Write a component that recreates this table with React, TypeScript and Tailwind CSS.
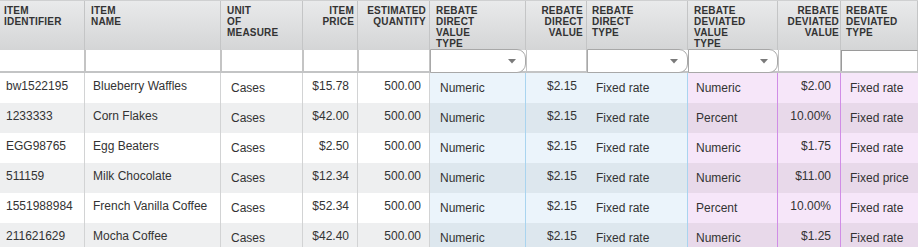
import React from 'react';

type Align = 'left' | 'right';
type Tone = 'plain' | 'direct' | 'deviated';

interface Column {
  key: string;
  label: string[];
  align: Align;
  tone: Tone;
  width: string;
  headPad: string;
  cellPad: string;
  divider: string;
  filter: 'input' | 'select';
}

const columns: Column[] = [
  { key: 'id', label: ['ITEM', 'IDENTIFIER'], align: 'left', tone: 'plain', width: 'w-[85px]', headPad: 'pl-[4px]', cellPad: 'pl-[6px] pr-[8px] pt-[5px]', divider: 'border-[#d2d3d4]', filter: 'input' },
  { key: 'name', label: ['ITEM', 'NAME'], align: 'left', tone: 'plain', width: 'w-[136px]', headPad: 'pl-[6px]', cellPad: 'pl-[8px] pt-[5px]', divider: 'border-[#d2d3d4]', filter: 'input' },
  { key: 'uom', label: ['UNIT', 'OF', 'MEASURE'], align: 'left', tone: 'plain', width: 'w-[82px]', headPad: 'pl-[6px]', cellPad: 'pl-[10px] pt-[7px]', divider: 'border-[#d2d3d4]', filter: 'input' },
  { key: 'price', label: ['ITEM', 'PRICE'], align: 'right', tone: 'plain', width: 'w-[55px]', headPad: 'pr-[3px]', cellPad: 'pr-[8px] pt-[5px]', divider: 'border-[#d2d3d4]', filter: 'input' },
  { key: 'qty', label: ['ESTIMATED', 'QUANTITY'], align: 'right', tone: 'plain', width: 'w-[72px]', headPad: 'pr-[3px]', cellPad: 'pr-[8px] pt-[5px]', divider: 'border-[#d2d3d4]', filter: 'input' },
  { key: 'dvt', label: ['REBATE', 'DIRECT', 'VALUE', 'TYPE'], align: 'left', tone: 'direct', width: 'w-[96px]', headPad: 'pl-[6px]', cellPad: 'pl-[10px] pt-[7px]', divider: 'border-[#a9d4ef]', filter: 'select' },
  { key: 'dv', label: ['REBATE', 'DIRECT', 'VALUE'], align: 'right', tone: 'direct', width: 'w-[61px]', headPad: 'pr-[3px]', cellPad: 'pr-[9px] pt-[5px]', divider: 'border-transparent', filter: 'input' },
  { key: 'dt', label: ['REBATE', 'DIRECT', 'TYPE'], align: 'left', tone: 'direct', width: 'w-[101px]', headPad: 'pl-[5px]', cellPad: 'pl-[9px] pt-[7px]', divider: 'border-[#a9d4ef]', filter: 'select' },
  { key: 'evt', label: ['REBATE', 'DEVIATED', 'VALUE', 'TYPE'], align: 'left', tone: 'deviated', width: 'w-[90px]', headPad: 'pl-[6px]', cellPad: 'pl-[8px] pt-[7px]', divider: 'border-[#d08de6]', filter: 'select' },
  { key: 'ev', label: ['REBATE', 'DEVIATED', 'VALUE'], align: 'right', tone: 'deviated', width: 'w-[63px]', headPad: 'pr-[1px]', cellPad: 'pr-[9px] pt-[5px]', divider: 'border-[#d08de6]', filter: 'input' },
  { key: 'et', label: ['REBATE', 'DEVIATED', 'TYPE'], align: 'left', tone: 'deviated', width: 'w-[77px]', headPad: 'pl-[5px]', cellPad: 'pl-[9px] pt-[7px]', divider: 'border-transparent', filter: 'input' },
];

const rows: Record<string, string>[] = [
  { id: 'bw1522195', name: 'Blueberry Waffles', uom: 'Cases', price: '$15.78', qty: '500.00', dvt: 'Numeric', dv: '$2.15', dt: 'Fixed rate', evt: 'Numeric', ev: '$2.00', et: 'Fixed rate' },
  { id: '1233333', name: 'Corn Flakes', uom: 'Cases', price: '$42.00', qty: '500.00', dvt: 'Numeric', dv: '$2.15', dt: 'Fixed rate', evt: 'Percent', ev: '10.00%', et: 'Fixed rate' },
  { id: 'EGG98765', name: 'Egg Beaters', uom: 'Cases', price: '$2.50', qty: '500.00', dvt: 'Numeric', dv: '$2.15', dt: 'Fixed rate', evt: 'Numeric', ev: '$1.75', et: 'Fixed rate' },
  { id: '511159', name: 'Milk Chocolate', uom: 'Cases', price: '$12.34', qty: '500.00', dvt: 'Numeric', dv: '$2.15', dt: 'Fixed rate', evt: 'Numeric', ev: '$11.00', et: 'Fixed price' },
  { id: '1551988984', name: 'French Vanilla Coffee', uom: 'Cases', price: '$52.34', qty: '500.00', dvt: 'Numeric', dv: '$2.15', dt: 'Fixed rate', evt: 'Percent', ev: '10.00%', et: 'Fixed rate' },
  { id: '211621629', name: 'Mocha Coffee', uom: 'Cases', price: '$42.40', qty: '500.00', dvt: 'Numeric', dv: '$2.15', dt: 'Fixed rate', evt: 'Numeric', ev: '$1.25', et: 'Fixed rate' },
];

function cellBg(tone: Tone, striped: boolean) {
  if (tone === 'direct') return striped ? 'bg-[#dde7ee]' : 'bg-[#ebf4fb]';
  if (tone === 'deviated') return striped ? 'bg-[#e8d9ea]' : 'bg-[#f6e6f9]';
  return striped ? 'bg-[#eeeff0]' : 'bg-white';
}

function Caret() {
  return (
    <svg width="8" height="5" viewBox="0 0 8 5" className="shrink-0">
      <path d="M0 0 L8 0 L4 4.5 Z" fill="#7a7a7a" />
    </svg>
  );
}

export default function App() {
  return (
    <div
      className="w-[918px] h-[247px] overflow-hidden bg-white text-[#333]"
      style={{ fontFamily: '"Liberation Sans", Arial, sans-serif' }}
    >
      {/* header */}
      <div className="flex h-[50px] border-t border-[#cfd0d1] bg-gradient-to-b from-[#e9eaeb] to-[#d4d5d6]">
        {columns.map((col) => (
          <div
            key={col.key}
            className={`${col.width} shrink-0 border-r border-[#c4c5c6] pt-[4px] text-[10px] leading-[11px] font-bold tracking-[0.2px] ${
              col.align === 'right' ? 'text-right' : 'text-left'
            } ${col.headPad}`}
          >
            {col.label.map((word) => (
              <div key={word}>{word}</div>
            ))}
          </div>
        ))}
      </div>

      {/* filter row */}
      <div className="flex h-[23px] border-b-2 border-[#c3c4c5] bg-white">
        {columns.map((col, i) => (
          <div key={col.key} className={`${col.width} shrink-0 h-full flex`}>
            {col.filter === 'select' ? (
              <div className="-mt-px h-[24px] flex-1 flex items-center justify-end pr-[9px] bg-white border border-[#a8a8a8] rounded-r-[9px]">
                <Caret />
              </div>
            ) : (
              <div
                className={`h-full flex-1 bg-white border-r border-[#c4c4c4] ${
                  i === 0 ? '' : 'border-l'
                } ${col.key === 'et' ? 'border-l-[#9a9a9a] border-t border-t-[#9a9a9a]' : ''}`}
              />
            )}
          </div>
        ))}
      </div>

      {/* body */}
      {rows.map((row, r) => (
        <div key={r} className="flex h-[30px] text-[12px] leading-[16px]">
          {columns.map((col) => (
            <div
              key={col.key}
              className={`${col.width} shrink-0 border-r ${col.divider} ${cellBg(
                col.tone,
                r % 2 === 1
              )} ${col.align === 'right' ? 'text-right' : 'text-left'} ${col.cellPad}`}
            >
              <div className="overflow-hidden whitespace-nowrap">{row[col.key]}</div>
            </div>
          ))}
        </div>
      ))}
    </div>
  );
}
